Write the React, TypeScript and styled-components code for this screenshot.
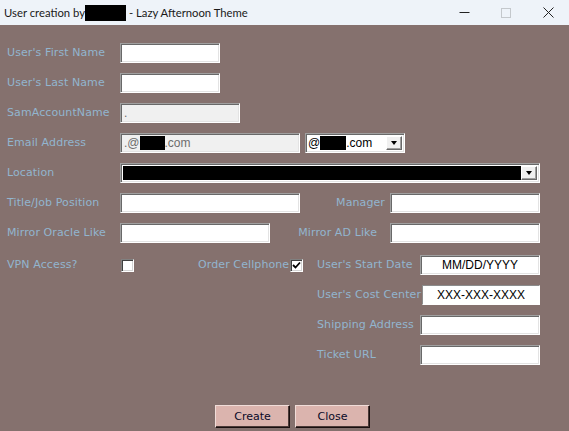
import styled, { createGlobalStyle } from "styled-components";

const GlobalStyle = createGlobalStyle`
  html, body {
    margin: 0;
    padding: 0;
    width: 569px;
    height: 431px;
    overflow: hidden;
    background: #85716e;
  }
`;

const Window = styled.div`
  width: 569px;
  height: 431px;
  display: flex;
  flex-direction: column;
  background: #85716e;
`;

const TitleBar = styled.header`
  height: 25px;
  background: #eef3f9;
  display: flex;
  align-items: center;
  padding-left: 4px;
  font-family: Lato, "Noto Sans", sans-serif;
  font-size: 11.3px;
  color: #1a1a1a;
`;

const TitleText = styled.span`
  display: flex;
  align-items: center;
  white-space: nowrap;
`;

const Redact = styled.span<{ $w: number; $h?: number }>`
  display: inline-block;
  width: ${(p) => p.$w}px;
  height: ${(p) => p.$h ?? 16}px;
  background: #000;
`;

const Controls = styled.div`
  margin-left: auto;
  display: flex;
  height: 100%;
`;

const CtlButton = styled.div`
  width: 42px;
  height: 100%;
  display: flex;
  align-items: center;
  justify-content: center;
`;

const Form = styled.main`
  flex: 1;
  display: flex;
  flex-direction: column;
  padding: 18px 0 0 7px;
  font-family: "DejaVu Sans", Tahoma, sans-serif;
  font-size: 11px;
  letter-spacing: 0.1px;
`;

const Row = styled.div<{ $gap?: number; $indent?: number }>`
  display: flex;
  align-items: center;
  height: 20px;
  margin-bottom: ${(p) => p.$gap ?? 10}px;
  padding-left: ${(p) => p.$indent ?? 0}px;
`;

const Label = styled.span<{ $w: number; $right?: boolean; $pr?: number; $ml?: number }>`
  width: ${(p) => p.$w}px;
  flex: none;
  color: #92b5cf;
  white-space: nowrap;
  text-align: ${(p) => (p.$right ? "right" : "left")};
  padding-right: ${(p) => p.$pr ?? 0}px;
  margin-left: ${(p) => p.$ml ?? 0}px;
  box-sizing: border-box;
  margin-top: -2px;
`;

const TextBox = styled.div<{ $w: number; $grey?: boolean; $flat?: boolean; $center?: boolean; $ml?: number }>`
  width: ${(p) => p.$w}px;
  height: 20px;
  flex: none;
  box-sizing: border-box;
  margin-left: ${(p) => p.$ml ?? 0}px;
  background: ${(p) => (p.$grey ? "#f0f0f0" : "#ffffff")};
  border: 1px solid;
  border-color: ${(p) => (p.$flat ? "#8c8c8c #ffffff #ffffff #8c8c8c" : "#a0a0a0 #ffffff #ffffff #a0a0a0")};
  box-shadow: ${(p) => (p.$flat ? "none" : "inset 1px 1px 0 #696969, inset -1px -1px 0 #e3e3e3")};
  display: flex;
  align-items: center;
  justify-content: ${(p) => (p.$center ? "center" : "flex-start")};
  padding: 0 3px;
  font-family: "Liberation Sans", Arial, sans-serif;
  font-size: 12px;
  letter-spacing: 0;
  color: ${(p) => (p.$grey ? "#6d6d6d" : "#000")};
  white-space: nowrap;
  overflow: hidden;
`;

const Combo = styled.div<{ $w: number; $ml?: number }>`
  width: ${(p) => p.$w}px;
  height: 20px;
  flex: none;
  box-sizing: border-box;
  margin-left: ${(p) => p.$ml ?? 0}px;
  background: #fff;
  border: 1px solid;
  border-color: #a0a0a0 #ffffff #ffffff #a0a0a0;
  box-shadow: inset 1px 1px 0 #696969, inset -1px -1px 0 #e3e3e3;
  display: flex;
  align-items: stretch;
  padding: 2px;
  font-family: "Liberation Sans", Arial, sans-serif;
  font-size: 12px;
  letter-spacing: 0;
  color: #000;
`;

const ComboValue = styled.div<{ $fill?: string }>`
  flex: 1;
  display: flex;
  align-items: center;
  background: ${(p) => p.$fill ?? "transparent"};
  white-space: nowrap;
  overflow: hidden;
`;

const DropButton = styled.div`
  width: 16px;
  flex: none;
  box-sizing: border-box;
  background: #f0f0f0;
  border: 1px solid;
  border-color: #ffffff #696969 #696969 #ffffff;
  box-shadow: inset -1px -1px 0 #a0a0a0;
  display: flex;
  align-items: center;
  justify-content: center;
`;

const Arrow = styled.span`
  width: 0;
  height: 0;
  border-left: 3.5px solid transparent;
  border-right: 3.5px solid transparent;
  border-top: 4px solid #000;
`;

const Check = styled.div<{ $ml?: number }>`
  width: 13px;
  height: 13px;
  flex: none;
  box-sizing: border-box;
  margin-left: ${(p) => p.$ml ?? 0}px;
  background: #fff;
  border: 1px solid;
  border-color: #808080 #ffffff #ffffff #808080;
  box-shadow: inset 1px 1px 0 #404040, inset -1px -1px 0 #d4d4d4;
  display: flex;
  align-items: center;
  justify-content: center;
`;

const Footer = styled.div`
  margin-top: auto;
  margin-bottom: 3px;
  display: flex;
  gap: 5px;
  padding-left: 208px;
`;

const Button = styled.button`
  width: 75px;
  height: 23px;
  box-sizing: border-box;
  background: #dbb4ae;
  border: 1px solid;
  border-color: #f0dcd8 #1a0f0f #1a0f0f #f0dcd8;
  box-shadow: inset -1px -1px 0 #4b3a38;
  font-family: "DejaVu Sans", Tahoma, sans-serif;
  font-size: 11px;
  color: #0a0a28;
  padding: 0;
`;

const CheckMark = () => (
  <svg width="9" height="9" viewBox="0 0 9 9">
    <path d="M1 4 L3.5 6.5 L8 1.5" stroke="#000" strokeWidth="1.8" fill="none" />
  </svg>
);

export default function App() {
  return (
    <Window>
      <GlobalStyle />
      <TitleBar>
        <TitleText>
          User creation by
          <Redact $w={41} />
          &nbsp;- Lazy Afternoon Theme
        </TitleText>
        <Controls>
          <CtlButton>
            <svg width="11" height="11" viewBox="0 0 11 11">
              <path d="M0.5 5.5 H10.5" stroke="#222" strokeWidth="1" />
            </svg>
          </CtlButton>
          <CtlButton>
            <svg width="10" height="10" viewBox="0 0 10 10">
              <rect x="0.5" y="0.5" width="9" height="9" stroke="#c4c8cc" fill="none" />
            </svg>
          </CtlButton>
          <CtlButton>
            <svg width="11" height="11" viewBox="0 0 11 11">
              <path d="M0.5 0.5 L10.5 10.5 M10.5 0.5 L0.5 10.5" stroke="#222" strokeWidth="1" />
            </svg>
          </CtlButton>
        </Controls>
      </TitleBar>
      <Form>
        <Row>
          <Label $w={113}>User's First Name</Label>
          <TextBox $w={100} />
        </Row>
        <Row>
          <Label $w={113}>User's Last Name</Label>
          <TextBox $w={100} />
        </Row>
        <Row>
          <Label $w={113}>SamAccountName</Label>
          <TextBox $w={120} $grey>.</TextBox>
        </Row>
        <Row>
          <Label $w={113}>Email Address</Label>
          <TextBox $w={180} $grey>
            .@<Redact $w={25} $h={14} />.com
          </TextBox>
          <Combo $w={100} $ml={5}>
            <ComboValue>
              @<Redact $w={26} $h={14} />.com
            </ComboValue>
            <DropButton>
              <Arrow />
            </DropButton>
          </Combo>
        </Row>
        <Row>
          <Label $w={113}>Location</Label>
          <Combo $w={420}>
            <ComboValue $fill="#000" />
            <DropButton>
              <Arrow />
            </DropButton>
          </Combo>
        </Row>
        <Row>
          <Label $w={113}>Title/Job Position</Label>
          <TextBox $w={180} />
          <Label $w={86} $right $pr={1}>Manager</Label>
          <TextBox $w={150} $ml={4} />
        </Row>
        <Row $gap={12}>
          <Label $w={113}>Mirror Oracle Like</Label>
          <TextBox $w={150} />
          <Label $w={116} $right $pr={9}>Mirror AD Like</Label>
          <TextBox $w={150} $ml={4} />
        </Row>
        <Row>
          <Label $w={114}>VPN Access?</Label>
          <Check />
          <Label $w={92} $ml={64}>Order Cellphone</Label>
          <Check>
            <CheckMark />
          </Check>
          <Label $w={103} $ml={14}>User's Start Date</Label>
          <TextBox $w={120} $center>MM/DD/YYYY</TextBox>
        </Row>
        <Row $indent={310}>
          <Label $w={105}>User's Cost Center</Label>
          <TextBox $w={118} $flat $center>XXX-XXX-XXXX</TextBox>
        </Row>
        <Row $indent={310}>
          <Label $w={103}>Shipping Address</Label>
          <TextBox $w={120} />
        </Row>
        <Row $indent={310}>
          <Label $w={103}>Ticket URL</Label>
          <TextBox $w={120} />
        </Row>
        <Footer>
          <Button>Create</Button>
          <Button>Close</Button>
        </Footer>
      </Form>
    </Window>
  );
}
